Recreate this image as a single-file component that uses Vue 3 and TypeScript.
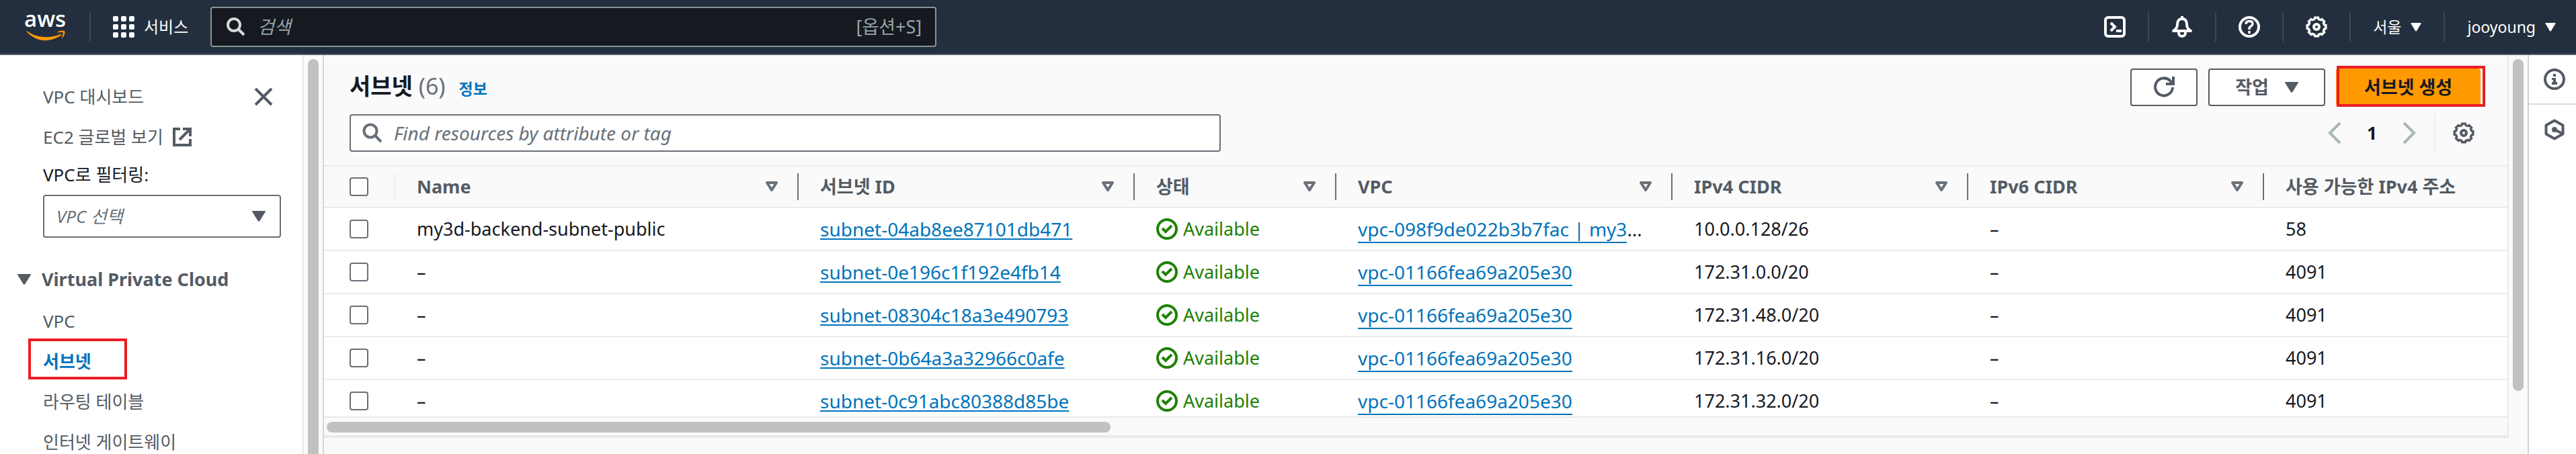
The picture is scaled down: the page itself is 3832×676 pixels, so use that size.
<script setup lang="ts">
import { ref } from 'vue'

interface Column {
  label: string
  width: number | null
}

interface Subnet {
  name: string
  id: string
  vpc: string
  truncated: boolean
  ipv4: string
  ipv6: string
  available: string
}

const columns: Column[] = [
  { label: 'Name', width: 600 },
  { label: '서브넷 ID', width: 500 },
  { label: '상태', width: 300 },
  { label: 'VPC', width: 500 },
  { label: 'IPv4 CIDR', width: 440 },
  { label: 'IPv6 CIDR', width: 440 },
  { label: '사용 가능한 IPv4 주소', width: null },
]

const defaultVpc = 'vpc-01166fea69a205e30'

const subnets: Subnet[] = [
  { name: 'my3d-backend-subnet-public', id: 'subnet-04ab8ee87101db471', vpc: 'vpc-098f9de022b3b7fac | my3', truncated: true, ipv4: '10.0.0.128/26', ipv6: '–', available: '58' },
  { name: '–', id: 'subnet-0e196c1f192e4fb14', vpc: defaultVpc, truncated: false, ipv4: '172.31.0.0/20', ipv6: '–', available: '4091' },
  { name: '–', id: 'subnet-08304c18a3e490793', vpc: defaultVpc, truncated: false, ipv4: '172.31.48.0/20', ipv6: '–', available: '4091' },
  { name: '–', id: 'subnet-0b64a3a32966c0afe', vpc: defaultVpc, truncated: false, ipv4: '172.31.16.0/20', ipv6: '–', available: '4091' },
  { name: '–', id: 'subnet-0c91abc80388d85be', vpc: defaultVpc, truncated: false, ipv4: '172.31.32.0/20', ipv6: '–', available: '4091' },
]

const links = [
  { label: 'VPC', active: false },
  { label: '서브넷', active: true },
  { label: '라우팅 테이블', active: false },
  { label: '인터넷 게이트웨이', active: false },
]

const selected = ref<string[]>([])

// Outline of an eight-toothed gear centred in a 32-unit box.
const gearPoints: string = (() => {
  const points: string[] = []
  const spec: [number, number][] = [[-10, 14], [10, 14], [15, 12], [30, 12]]
  for (let tooth = 0; tooth < 8; tooth++) {
    for (const [offset, radius] of spec) {
      const a = ((tooth * 45 + offset - 90) * Math.PI) / 180
      points.push(`${(16 + radius * Math.cos(a)).toFixed(2)},${(16 + radius * Math.sin(a)).toFixed(2)}`)
    }
  }
  return points.join(' ')
})()
</script>

<template>
  <div class="console">
    <header class="topbar">
      <a class="logo" href="#" aria-label="aws">
        <span class="logo-text">aws</span>
        <svg class="smile" viewBox="0 0 64 20" aria-hidden="true">
          <path d="M1 2.500C10 9 21 12.500 33 12.500c8 0 16-1.700 23.500-5 1.200-.5 2.200.8 1 1.700C50.500 14.500 41 18 31.500 18 19.500 18 8.500 12.500.4 3.700-.2 3 .3 2.100 1 2.500z" />
          <path d="M60.500 5.200c-1-1.200-6.400-.6-8.700-.3-.8.100-.9-.5-.2-1 4.200-2.900 11-2.100 11.800-1.100.8 1-.2 7.900-4.100 11.200-.6.5-1.200.2-.9-.4.900-2.200 3-7.200 2.100-8.400z" />
        </svg>
      </a>
      <button class="services" type="button">
        <svg class="grid-icon" viewBox="0 0 32 32" aria-hidden="true">
          <template v-for="r in 3" :key="r">
            <rect v-for="c in 3" :key="c" :x="(c - 1) * 12" :y="(r - 1) * 12" width="8" height="8" rx="2" />
          </template>
        </svg>
        <span>서비스</span>
      </button>
      <label class="global-search">
        <svg class="icon" viewBox="0 0 32 32" aria-hidden="true">
          <circle cx="13" cy="13" r="9" /><path d="M19 19l9 9" />
        </svg>
        <input type="text" placeholder="검색" aria-label="검색" />
        <span class="hint">[옵션+S]</span>
      </label>
      <nav class="tools">
        <button type="button" aria-label="CloudShell">
          <svg class="icon" viewBox="0 0 32 32" aria-hidden="true">
            <rect x="2" y="2" width="28" height="28" rx="4" /><path d="M10 10l6 6-6 6M18 22h8" />
          </svg>
        </button>
        <button type="button" aria-label="알림">
          <svg class="icon" viewBox="0 0 32 32" aria-hidden="true">
            <path d="M16 0v4M16 4c-5 0-7 4-7 8 0 5-2 7-6 10h26c-4-3-6-5-6-10 0-4-2-8-7-8z" stroke-linejoin="round" /><path d="M11 23v2a5 5 0 0 0 10 0v-2" />
          </svg>
        </button>
        <button type="button" aria-label="도움말">
          <svg class="icon" viewBox="0 0 32 32" aria-hidden="true">
            <circle cx="16" cy="16" r="14" /><path d="M11 12c0-3 2-4.500 5-4.500s5 1.500 5 4.200c0 3.300-5 3.300-5 6.600v1.700M16 22v4" stroke-width="3.500" />
          </svg>
        </button>
        <button type="button" aria-label="설정">
          <svg class="icon" viewBox="0 0 32 32" aria-hidden="true">
            <polygon :points="gearPoints" /><circle cx="16" cy="16" r="4" />
          </svg>
        </button>
        <button type="button">서울<svg class="caret-small" viewBox="0 0 16 13" aria-hidden="true"><path d="M1 0h14q1 0 .6 1L9 12q-1 1-2 0L.4 1Q0 0 1 0z" /></svg></button>
        <button type="button">jooyoung<svg class="caret-small" viewBox="0 0 16 13" aria-hidden="true"><path d="M1 0h14q1 0 .6 1L9 12q-1 1-2 0L.4 1Q0 0 1 0z" /></svg></button>
      </nav>
    </header>

    <div class="body">
      <aside class="sidebar">
        <div class="side-row">
          <a href="#">VPC 대시보드</a>
          <button class="close" type="button" aria-label="닫기">
            <svg class="icon" viewBox="0 0 28 28" aria-hidden="true"><path d="M2 2l24 24M26 2L2 26" /></svg>
          </button>
        </div>
        <a class="side-ext" href="#">EC2 글로벌 보기
          <svg class="icon" viewBox="0 0 28 28" aria-hidden="true"><path d="M11 2H2v24h24v-9M10 18L25 3M15 2h11v11" /></svg>
        </a>
        <label class="filter-label" for="vpc-filter">VPC로 필터링:</label>
        <div class="select-wrap">
          <select id="vpc-filter"><option>VPC 선택</option></select>
          <svg class="caret" viewBox="0 0 20 16" aria-hidden="true"><path d="M1 0h18q1.500 0 .7 1.500L11.300 15q-1.300 1.600-2.600 0L.3 1.500Q-.5 0 1 0z" /></svg>
        </div>
        <button class="section" type="button">
          <svg class="caret" viewBox="0 0 20 16" aria-hidden="true"><path d="M1 0h18q1.500 0 .7 1.500L11.300 15q-1.300 1.600-2.600 0L.3 1.500Q-.5 0 1 0z" /></svg>
          Virtual Private Cloud
        </button>
        <ul class="side-links">
          <li v-for="l in links" :key="l.label">
            <a href="#" :class="{ active: l.active }">{{ l.label }}</a>
          </li>
        </ul>
      </aside>
      <div class="track side-track"><div class="thumb"></div></div>

      <main class="content">
        <section class="panel">
          <div class="panel-head">
            <div class="title-row">
              <h1>서브넷 <span class="count">(6)</span></h1>
              <a class="info" href="#">정보</a>
              <div class="actions">
                <button class="btn refresh" type="button" aria-label="새로 고침">
                  <svg class="icon" viewBox="0 0 32 32" aria-hidden="true"><path d="M29 16a13 13 0 1 1-4-10l4 4M30 0v11H19" /></svg>
                </button>
                <button class="btn menu" type="button">작업
                  <svg class="caret" viewBox="0 0 20 16" aria-hidden="true"><path d="M1 0h18q1.500 0 .7 1.500L11.300 15q-1.300 1.600-2.600 0L.3 1.500Q-.5 0 1 0z" /></svg>
                </button>
                <div class="marked"><button class="btn primary" type="button">서브넷 생성</button></div>
              </div>
            </div>
            <div class="filter-row">
              <label class="find">
                <svg class="icon" viewBox="0 0 32 32" aria-hidden="true">
                  <circle cx="13" cy="13" r="9.500" /><path d="M20 20l9 9" />
                </svg>
                <input type="text" placeholder="Find resources by attribute or tag" aria-label="Find resources by attribute or tag" />
              </label>
              <div class="pager">
                <button type="button" aria-label="이전"><svg class="icon chevron" viewBox="0 0 20 32" aria-hidden="true"><path d="M18 1L3 16l15 15" /></svg></button>
                <button class="page" type="button">1</button>
                <button type="button" aria-label="다음"><svg class="icon chevron" viewBox="0 0 20 32" aria-hidden="true"><path d="M2 1l15 15L2 31" /></svg></button>
                <button class="prefs" type="button" aria-label="기본 설정">
                  <svg class="icon" viewBox="0 0 32 32" aria-hidden="true">
                    <polygon :points="gearPoints" /><circle cx="16" cy="16" r="4" />
                  </svg>
                </button>
              </div>
            </div>
          </div>

          <div class="table-wrap">
            <table>
              <colgroup>
                <col class="check-col" />
                <col v-for="c in columns" :key="c.label" :style="c.width ? { width: c.width + 'px' } : {}" />
              </colgroup>
              <thead>
                <tr>
                  <th class="check"><input type="checkbox" aria-label="모두 선택" /></th>
                  <th v-for="c in columns" :key="c.label">
                    <div class="th-inner">
                      <span>{{ c.label }}</span>
                      <svg v-if="c.width" class="sort" viewBox="0 0 20 16" aria-hidden="true"><path d="M3 2h14l-7 11z" /></svg>
                    </div>
                  </th>
                </tr>
              </thead>
              <tbody>
                <tr v-for="s in subnets" :key="s.id">
                  <td class="check"><input v-model="selected" type="checkbox" :value="s.id" :aria-label="s.id" /></td>
                  <td>{{ s.name }}</td>
                  <td class="link-cell"><a class="id-link" href="#">{{ s.id }}</a></td>
                  <td>
                    <span class="status">
                      <svg class="icon" viewBox="0 0 32 32" aria-hidden="true"><circle cx="16" cy="16" r="14" /><path d="M9 15l5 5 9-9" /></svg>
                      Available
                    </span>
                  </td>
                  <td class="link-cell"><a class="vpc-link" href="#">{{ s.vpc }}</a><template v-if="s.truncated">…</template></td>
                  <td>{{ s.ipv4 }}</td>
                  <td>{{ s.ipv6 }}</td>
                  <td>{{ s.available }}</td>
                </tr>
              </tbody>
            </table>
          </div>
          <div class="h-track"><div class="h-thumb"></div></div>
        </section>
      </main>
      <div class="track main-track"><div class="thumb"></div></div>

      <aside class="rail">
        <button type="button" aria-label="정보">
          <svg class="icon" viewBox="0 0 32 32" aria-hidden="true">
            <circle cx="16" cy="16" r="14" /><path class="fill" d="M14 8h4v4h-4zM12 14h6v6h2v4h-8v-4h2v-3h-2z" />
          </svg>
        </button>
        <button type="button" aria-label="리소스">
          <svg class="icon" viewBox="0 0 32 32" aria-hidden="true">
            <path d="M16 2.500l12.500 7v13L16 29.500l-12.500-7v-13z" stroke-linejoin="round" /><path d="M16 16l12 6" /><circle class="fill" cx="16" cy="16" r="4" />
          </svg>
        </button>
      </aside>
    </div>
  </div>
</template>

<style>
body {
  margin: 0;
}
</style>

<style scoped>
*,
*::before,
*::after {
  box-sizing: border-box;
}

.console {
  display: flex;
  flex-direction: column;
  height: 100vh;
  overflow: hidden;
  background: #fafafa;
  color: #16191f;
  font-family: "Noto Sans", "Noto Sans CJK KR", sans-serif;
  font-size: 27px;
  line-height: 40px;
}

button,
input,
select {
  font: inherit;
  color: inherit;
  background: none;
  border: 0;
  padding: 0;
  margin: 0;
}

button {
  white-space: nowrap;
}

a {
  color: inherit;
  text-decoration: none;
}

svg {
  display: block;
  flex: none;
}

.icon {
  width: 32px;
  height: 32px;
  fill: none;
  stroke: currentColor;
  stroke-width: 4;
  overflow: visible;
}

.icon polygon {
  stroke-width: 3.5;
}

.fill {
  fill: currentColor;
  stroke: none;
}

.caret {
  width: 20px;
  height: 16px;
  fill: #545b64;
}

/* Top bar */
.topbar {
  display: flex;
  align-items: center;
  flex: none;
  height: 82px;
  background: #232f3e;
  border-bottom: 2px solid #545b64;
  color: #fff;
  font-size: 24px;
}

.logo {
  display: flex;
  flex-direction: column;
  justify-content: center;
  height: 44px;
  padding: 0 33px 0 36px;
  border-right: 2px solid #414750;
}

.logo-text {
  width: 62px;
  height: 26px;
  text-align: center;
  font-family: "Open Sans", sans-serif;
  font-size: 33px;
  font-weight: 600;
  line-height: 20px;
}

.smile {
  width: 64px;
  height: 18px;
  fill: #f90;
}

.services {
  display: flex;
  align-items: center;
  gap: 14px;
  padding: 0 33px;
}

.grid-icon {
  width: 32px;
  height: 32px;
  fill: #fff;
}

.global-search {
  display: flex;
  align-items: center;
  gap: 16px;
  width: 1080px;
  height: 60px;
  padding: 0 20px;
  background: #16191f;
  border: 2px solid #879596;
  border-radius: 4px;
  color: #d5dbdb;
  font-size: 27px;
}

.global-search input {
  flex: 1;
  min-width: 0;
  outline: 0;
}

.global-search input::placeholder {
  color: #95a5a6;
  opacity: 1;
  font-style: italic;
}

.hint {
  color: #95a5a6;
}

.tools {
  display: flex;
  align-items: center;
  margin-left: auto;
  font-size: 23px;
}

.tools button {
  display: flex;
  align-items: center;
  gap: 14px;
  height: 44px;
  padding: 0 33px;
  border-right: 2px solid #414750;
}

.tools button:last-child {
  padding-right: 30px;
  border-right: 0;
}

.caret-small {
  width: 16px;
  height: 13px;
  fill: #fff;
}

/* Shell */
.body {
  display: flex;
  flex: 1;
  min-height: 0;
}

.track {
  flex: none;
  width: 28px;
  padding: 6px 6px 0;
  background: #fafafa;
}

.track .thumb {
  width: 16px;
  border-radius: 8px;
  background: #c1c1c1;
}

.side-track .thumb {
  height: 100%;
  border-radius: 8px 8px 0 0;
}

/* Sidebar */
.sidebar {
  flex: none;
  width: 452px;
  padding: 42px 32px 0 64px;
  overflow: hidden;
  background: #fff;
  border-right: 2px solid #e6e8e8;
  color: #545b64;
  font-size: 26px;
}

.side-row {
  display: flex;
  justify-content: space-between;
  margin-bottom: 20px;
}

.close {
  width: 28px;
  margin-right: 12px;
}

.close .icon,
.side-ext .icon {
  width: 28px;
  height: 28px;
}

.side-ext {
  display: flex;
  align-items: center;
  gap: 14px;
  margin-bottom: 16px;
}

.filter-label {
  display: block;
  margin-bottom: 10px;
  color: #16191f;
}

.select-wrap {
  position: relative;
}

.select-wrap select {
  appearance: none;
  width: 100%;
  height: 64px;
  padding: 0 18px;
  background: #fff;
  border: 2px solid #687078;
  border-radius: 4px;
  color: #687078;
  font-style: italic;
}

.select-wrap .caret {
  position: absolute;
  right: 23px;
  top: 24px;
  pointer-events: none;
}

.section {
  display: flex;
  align-items: center;
  gap: 16px;
  margin: 42px 0 22px -38px;
  font-size: 27px;
  font-weight: 700;
}

.side-links {
  margin: 0;
  padding: 0;
  list-style: none;
}

.side-links li {
  margin-bottom: 20px;
}

.side-links a {
  display: block;
  position: relative;
}

.side-links .active {
  color: #0073bb;
  font-weight: 700;
}

.side-links .active::after {
  content: "";
  position: absolute;
  left: -22px;
  top: -14px;
  width: 147px;
  height: 61px;
  border: 4px solid #ed1c24;
}

/* Main panel */
.content {
  display: flex;
  flex: 1;
  min-width: 0;
  padding-bottom: 24px;
  border-left: 2px solid #d0d5d8;
}

.panel {
  display: flex;
  flex: 1;
  flex-direction: column;
  min-width: 0;
  border-right: 2px solid #e9ebeb;
  border-bottom: 4px solid #e9ebeb;
}

.panel-head {
  flex: none;
  padding: 20px 33px 20px 38px;
  border-bottom: 2px solid #eaeded;
}

.title-row {
  display: flex;
  align-items: flex-start;
  margin-bottom: 12px;
}

h1 {
  margin: 2px 0 0;
  font-size: 34px;
  line-height: 48px;
}

.count {
  color: #687078;
  font-weight: 400;
}

.info {
  margin: 10px 0 0 20px;
  color: #0073bb;
  font-size: 23px;
  font-weight: 700;
}

.actions {
  display: flex;
  gap: 16px;
  margin-left: auto;
}

.btn {
  display: flex;
  align-items: center;
  justify-content: center;
  height: 56px;
  border: 2px solid #545b64;
  border-radius: 4px;
  background: #fff;
  color: #545b64;
  font-weight: 700;
}

.refresh {
  width: 100px;
}

.menu {
  gap: 24px;
  width: 174px;
}

.marked {
  position: relative;
  width: 222px;
}

.marked::after {
  content: "";
  position: absolute;
  left: 1px;
  top: -4px;
  width: 221px;
  height: 61px;
  border: 4px solid #ed1c24;
  pointer-events: none;
}

.primary {
  width: 215px;
  border-color: #f90;
  background: #f90;
  color: #16191f;
}

.filter-row {
  display: flex;
  align-items: center;
  justify-content: space-between;
}

.find {
  display: flex;
  align-items: center;
  gap: 16px;
  flex: 0 1 1296px;
  height: 56px;
  padding: 0 16px;
  background: #fff;
  border: 2px solid #687078;
  border-radius: 4px;
  color: #687078;
  font-size: 28px;
}

.find input {
  flex: 1;
  min-width: 0;
  outline: 0;
}

.find input::placeholder {
  color: #687078;
  opacity: 1;
  font-style: italic;
}

.pager {
  display: flex;
  align-items: center;
  height: 56px;
  margin-right: 16px;
}

.pager button {
  display: flex;
  align-items: center;
  justify-content: center;
}

.chevron {
  width: 20px;
  color: #aab7b8;
}

.pager .page {
  width: 91px;
  font-weight: 700;
}

.pager .prefs {
  height: 56px;
  margin-left: 27px;
  padding-left: 26px;
  border-left: 2px solid #eaeded;
  color: #545b64;
}

/* Table */
.table-wrap {
  flex: 1;
  min-height: 0;
  overflow: hidden;
}

table {
  width: 100%;
  table-layout: fixed;
  border-spacing: 0;
  background: #fff;
}

.check-col {
  width: 106px;
}

th,
td {
  height: 64px;
  padding: 0 0 0 32px;
  border-bottom: 2px solid #eaeded;
  text-align: left;
  white-space: nowrap;
}

th {
  height: 62px;
  background: #fafafa;
  color: #545b64;
}

.link-cell {
  font-size: 28px;
}

.th-inner {
  display: flex;
  align-items: center;
  justify-content: space-between;
  padding-right: 28px;
  border-right: 2px solid #687078;
}

th:last-child .th-inner {
  border-right: 0;
}

.check {
  padding: 0 0 0 38px;
}

th.check {
  background: linear-gradient(#eaeded, #eaeded) right center / 2px 40px no-repeat #fafafa;
}

.check input {
  appearance: none;
  display: block;
  width: 28px;
  height: 28px;
  border: 2px solid #687078;
  border-radius: 4px;
  background: #fff;
}

.sort {
  width: 20px;
  height: 16px;
  fill: none;
  stroke: #687078;
  stroke-width: 4;
  stroke-linejoin: round;
}

.id-link {
  color: #0073bb;
  text-decoration: underline;
  text-decoration-thickness: 2px;
  text-underline-offset: 3px;
  text-decoration-skip-ink: none;
}

.vpc-link {
  color: #0073bb;
  border-bottom: 2px solid #0073bb;
}

.status {
  display: flex;
  align-items: center;
  gap: 8px;
  color: #1d8102;
}

.h-track {
  flex: none;
  height: 28px;
  padding: 6px 4px;
  border-top: 2px solid #e8e8e8;
  background: #fafafa;
}

.h-thumb {
  width: 36%;
  height: 16px;
  border-radius: 8px;
  background: #c1c1c1;
}

.main-track .thumb {
  height: 84%;
}

/* Right rail */
.rail {
  flex: none;
  width: 72px;
  background: #fff;
  border-left: 2px solid #cdd3d6;
  color: #545b64;
}

.rail button {
  display: flex;
  align-items: center;
  justify-content: center;
  width: 100%;
  height: 74px;
  padding-left: 6px;
  border-bottom: 2px solid #d5dbdb;
}

.rail button:last-child {
  border-bottom: 0;
}
</style>
